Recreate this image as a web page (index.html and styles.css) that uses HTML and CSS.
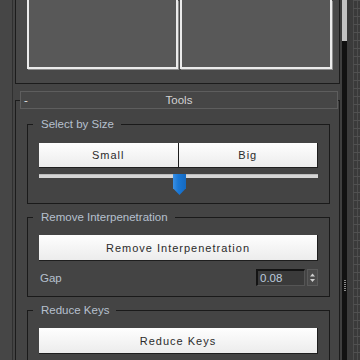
FILE: index.html
```html
<!DOCTYPE html>
<html>
<head>
	<title>Tools</title>
	<link rel="stylesheet" href="styles.css">
</head>
<body>
	<div class="app">
		<div class="side"></div>
		<div class="main">
			<div class="preview">
				<div class="frames">
					<div class="frame"></div>
					<div class="frame frame-right"></div>
				</div>
			</div>
			<div class="rollout">
				<div class="rollout-head">
					<span class="toggle">-</span>
					<span class="title">Tools</span>
					<span></span>
				</div>
				<fieldset class="group group-size">
					<legend>Select by Size</legend>
					<div class="btn-row">
						<button class="btn">Small</button>
						<button class="btn">Big</button>
					</div>
					<div class="slider">
						<div class="track"></div>
						<div class="thumb" style="left: 134px"></div>
					</div>
				</fieldset>
				<fieldset class="group group-pen">
					<legend>Remove Interpenetration</legend>
					<button class="btn btn-wide">Remove Interpenetration</button>
					<div class="field-row">
						<span class="field-label">Gap</span>
						<div class="spinner">
							<span class="spin-value">0.08</span>
							<svg class="spin-arrows" width="11" height="17" viewBox="0 0 11 17">
								<rect x="0" y="0" width="11" height="17" fill="#4a4a4a"/>
								<rect x="0.5" y="0.5" width="10" height="16" fill="none" stroke="#5a5a5a"/>
								<polygon points="3,7.5 8,7.5 5.5,4.5" fill="#cfcfcf"/>
								<polygon points="3,10 8,10 5.5,13" fill="#cfcfcf"/>
							</svg>
						</div>
					</div>
				</fieldset>
				<fieldset class="group group-keys">
					<legend>Reduce Keys</legend>
					<button class="btn btn-wide">Reduce Keys</button>
				</fieldset>
			</div>
		</div>
		<div class="gutter"></div>
		<div class="scrollbar">
			<div class="scroll-thumb"></div>
			<div class="scroll-track"><div class="grip"></div></div>
		</div>
		<div class="gutter-right"></div>
		<div class="grid"></div>
	</div>
</body>
</html>
```

FILE: styles.css
```css
* {
	box-sizing: border-box;
}

body {
	margin: 0;
	padding: 0;
	background-color: #444444;
	font-family: "Liberation Sans", Arial, sans-serif;
	font-size: 11.5px;
	color: #c8c8c8;
}

.app {
	display: flex;
	height: 360px;
	overflow: hidden;
}

.side {
	width: 13px;
	flex: none;
	background-color: #464646;
	border-right: 1px solid #303030;
	margin-right: 2px;
}

.main {
	width: 325px;
	flex: none;
	display: flex;
	flex-direction: column;
}

/* top viewport panel */
.preview {
	height: 84px;
	flex: none;
	background-color: #484848;
	border: 1px solid #1c1c1c;
	border-top: none;
	padding-left: 11px;
}

.frames {
	display: flex;
	gap: 2px;
	height: 69px;
}

.frame {
	width: 151px;
	background-color: #585858;
	border: 2px solid #ebebeb;
	border-top: none;
	box-shadow: 1px 1px 0 #8c8c8c;
}

.frame-right {
	width: 152px;
}

/* rollout */
.rollout {
	flex: 1;
	margin-top: 16px;
	border: 1px solid #1c1c1c;
	border-bottom: none;
}

.rollout-head {
	display: grid;
	grid-template-columns: 1fr auto 1fr;
	align-items: center;
	height: 18px;
	margin: -10px 1px 0 4px;
	background-color: #464646;
	border: 1px solid #5e5e5e;
	line-height: 14px;
}

.toggle {
	padding-left: 3px;
	color: #e0e0e0;
}

.title {
	color: #d2d2d2;
}

.group {
	margin: 8px 9px 0 11px;
	padding: 12px 11px 7px;
	border: 1px solid #1a1a1a;
	min-width: 0;
}

.group legend {
	margin-left: -6px;
	padding: 0 7px 0 8px;
	line-height: 14px;
	color: #b6c0ce;
}

.group-pen {
	margin-top: 6px;
	padding: 11px 11px 10px;
}

.group-keys {
	margin-top: 6px;
	padding: 11px 11px 10px;
}

.btn-row {
	display: flex;
	height: 25px;
}

.btn {
	flex: 1;
	height: 25px;
	padding: 0;
	font-family: "Liberation Sans", Arial, sans-serif;
	font-size: 11px;
	letter-spacing: 1px;
	color: #2b2b2b;
	background: linear-gradient(#fefefe, #ececec);
	border: none;
	border-right: 1px solid #1e1e1e;
	border-bottom: 1px solid #1e1e1e;
}

.btn-wide {
	display: block;
	width: 100%;
	height: 26px;
}

/* slider */
.slider {
	position: relative;
	height: 22px;
	margin-top: 6px;
}

.track {
	margin-top: 6px;
	height: 4px;
	background-color: #d6d6d6;
	border-top: 1px solid #bdbdbd;
}

.thumb {
	position: absolute;
	top: 0;
	width: 13px;
	height: 21px;
	background: linear-gradient(90deg, #3a8fe3, #1a78d6 40%, #1569c0);
	clip-path: polygon(0 0, 100% 0, 100% 68%, 50% 100%, 0 68%);
}

/* gap spinner */
.field-row {
	display: flex;
	align-items: center;
	height: 17px;
	margin-top: 8px;
}

.field-label {
	flex: 1;
	padding-left: 1px;
	color: #b6c0ce;
}

.spinner {
	display: flex;
	gap: 2px;
}

.spin-value {
	width: 49px;
	height: 17px;
	padding-left: 2px;
	line-height: 14px;
	background-color: #3a3a3a;
	border-top: 2px solid #141414;
	border-left: 2px solid #141414;
	border-right: 1px solid #555555;
	border-bottom: 1px solid #555555;
	color: #bccadc;
}

.spin-arrows {
	display: block;
}

/* right edge */
.gutter {
	width: 2px;
	flex: none;
	background-color: #3e3e3e;
}

.scrollbar {
	width: 5px;
	flex: none;
	display: flex;
	flex-direction: column;
}

.scroll-thumb {
	height: 41px;
	background-color: #c4c4c4;
}

.scroll-track {
	flex: 1;
	background-color: #111111;
	padding-top: 239px;
}

.grip {
	width: 2px;
	height: 11px;
	margin-left: 2px;
	background: repeating-linear-gradient(to bottom, #8a8a8a 0 1px, transparent 1px 2px);
}

.gutter-right {
	width: 6px;
	flex: none;
	background-color: #3b3b3b;
}

.grid {
	flex: 1;
	background:
		repeating-linear-gradient(to bottom, #505050 0 1px, transparent 1px 8px),
		repeating-linear-gradient(to right, #4d4d4d 0 1px, #3a3a3a 1px 4px);
}
```
